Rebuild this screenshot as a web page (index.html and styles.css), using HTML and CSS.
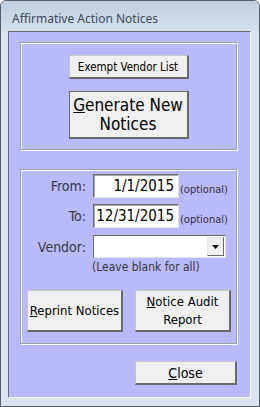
FILE: index.html
```html
<!DOCTYPE html>
<html lang="en">
<head>
  <meta charset="UTF-8" />
  <title>Affirmative Action Notices</title>
  <link rel="stylesheet" href="styles.css">
</head>
<body>

<div class="window">
  <div class="titlebar">Affirmative Action Notices</div>

  <div class="client">
    <div class="frame frame-top">
      <button class="btn btn-small">Exempt Vendor List</button>
      <button class="btn btn-big"><u>G</u>enerate New<br>Notices</button>
    </div>

    <div class="frame frame-bottom">
      <div class="field">
        <label>From:</label>
        <div class="textbox">1/1/2015</div>
        <span class="hint">(optional)</span>
      </div>
      <div class="field">
        <label>To:</label>
        <div class="textbox">12/31/2015</div>
        <span class="hint">(optional)</span>
      </div>
      <div class="field field-vendor">
        <label>Vendor:</label>
        <div class="combo">
          <div class="combo-text"></div>
          <div class="combo-arrow">
            <svg width="7" height="4" viewBox="0 0 7 4"><path d="M0 0h7L3.5 4z" fill="#000"/></svg>
          </div>
        </div>
      </div>
      <div class="note">(Leave blank for all)</div>

      <div class="btn-row">
        <button class="btn btn-mid"><u>R</u>eprint Notices</button>
        <button class="btn btn-mid"><u>N</u>otice Audit<br>Report</button>
      </div>
    </div>

    <div class="footer">
      <button class="btn btn-close"><u>C</u>lose</button>
    </div>
  </div>
</div>

</body>
</html>
```

FILE: styles.css
```css
body {
  margin: 0;
  background: #ffffff;
  font-family: "DejaVu Sans Condensed", "DejaVu Sans", sans-serif;
}

.window {
  box-sizing: border-box;
  width: 260px;
  height: 407px;
  border: 1px solid #5b5f66;
  border-radius: 6px 6px 0 0;
  background: #dae5f1;
  padding: 0 8px 8px 7px;
  display: flex;
  flex-direction: column;
}

.titlebar {
  height: 30px;
  line-height: 35px;
  font-family: "Noto Sans", sans-serif;
  font-size: 12px;
  color: #3e4c5c;
  background: linear-gradient(#bfcedf, #d4e0ed);
  margin: 0 -8px 0 -7px;
  padding-left: 11px;
  border-radius: 5px 5px 0 0;
}

.client {
  box-sizing: border-box;
  height: 367px;
  background: #b9b9fe;
  border-top: 1px solid #6b6b6b;
  border-left: 1px solid #6b6b6b;
  border-right: 1px solid #ffffff;
  border-bottom: 1px solid #ffffff;
  padding: 10px 0 0 11px;
}

.frame {
  box-sizing: border-box;
  width: 217px;
  border: 1px solid #a0a0a0;
  box-shadow: inset 1px 1px 0 #ffffff, 1px 1px 0 #ffffff;
}

.frame-top {
  height: 108px;
  padding-top: 12px;
  display: flex;
  flex-direction: column;
  align-items: center;
  gap: 12px;
}

.frame-bottom {
  height: 175px;
  margin-top: 19px;
  padding: 4px 0 0 0;
}

.btn {
  box-sizing: border-box;
  background: #f0f0f0;
  border-top: 1px solid #c8c8c8;
  border-left: 1px solid #c8c8c8;
  border-right: 2px solid #696969;
  border-bottom: 2px solid #696969;
  font-family: "DejaVu Sans Condensed", "DejaVu Sans", sans-serif;
  color: #000;
  padding: 0;
  white-space: nowrap;
  cursor: pointer;
}

.btn-small {
  width: 120px;
  height: 24px;
  font-size: 11.5px;
}

.btn-big {
  width: 120px;
  height: 48px;
  font-size: 17px;
  line-height: 19px;
  border-top: 1px solid #696969;
  border-left: 1px solid #696969;
}

.field {
  display: flex;
  align-items: center;
  height: 24px;
  margin-bottom: 6px;
}

.field label {
  width: 65px;
  text-align: right;
  font-size: 14px;
  color: #3a3a3a;
  margin-right: 7px;
}

.textbox {
  box-sizing: border-box;
  width: 86px;
  height: 24px;
  background: #fff;
  border-top: 1px solid #6b6b6b;
  border-left: 1px solid #6b6b6b;
  border-right: 1px solid #e6e6e6;
  border-bottom: 1px solid #e6e6e6;
  box-shadow: inset 1px 1px 0 #a8a8a8;
  font-size: 15px;
  line-height: 22px;
  text-align: right;
  padding-right: 4px;
  color: #000;
}

.hint {
  font-size: 11px;
  color: #333;
  margin-left: 1px;
  margin-top: 6px;
}

.field-vendor {
  margin-top: 7px;
  height: 23px;
  margin-bottom: 0;
}

.combo {
  box-sizing: border-box;
  width: 133px;
  height: 23px;
  background: #fff;
  border-top: 1px solid #6b6b6b;
  border-left: 1px solid #6b6b6b;
  border-right: 1px solid #e6e6e6;
  border-bottom: 1px solid #e6e6e6;
  display: flex;
  justify-content: flex-end;
  padding: 1px;
}

.combo-arrow {
  box-sizing: border-box;
  width: 17px;
  background: #f0f0f0;
  border-top: 1px solid #e3e3e3;
  border-left: 1px solid #e3e3e3;
  border-right: 1px solid #696969;
  border-bottom: 1px solid #696969;
  display: flex;
  align-items: center;
  justify-content: center;
}

.note {
  margin: 2px 0 0 71px;
  font-size: 12px;
  color: #3a3a3a;
}

.btn-row {
  display: flex;
  gap: 12px;
  margin: 16px 0 0 6px;
}

.btn-mid {
  width: 96px;
  height: 42px;
  font-size: 13px;
  line-height: 18px;
}

.footer {
  display: flex;
  justify-content: flex-end;
  padding-right: 13px;
  margin-top: 17px;
}

.btn-close {
  width: 102px;
  height: 24px;
  font-size: 14px;
}
```
